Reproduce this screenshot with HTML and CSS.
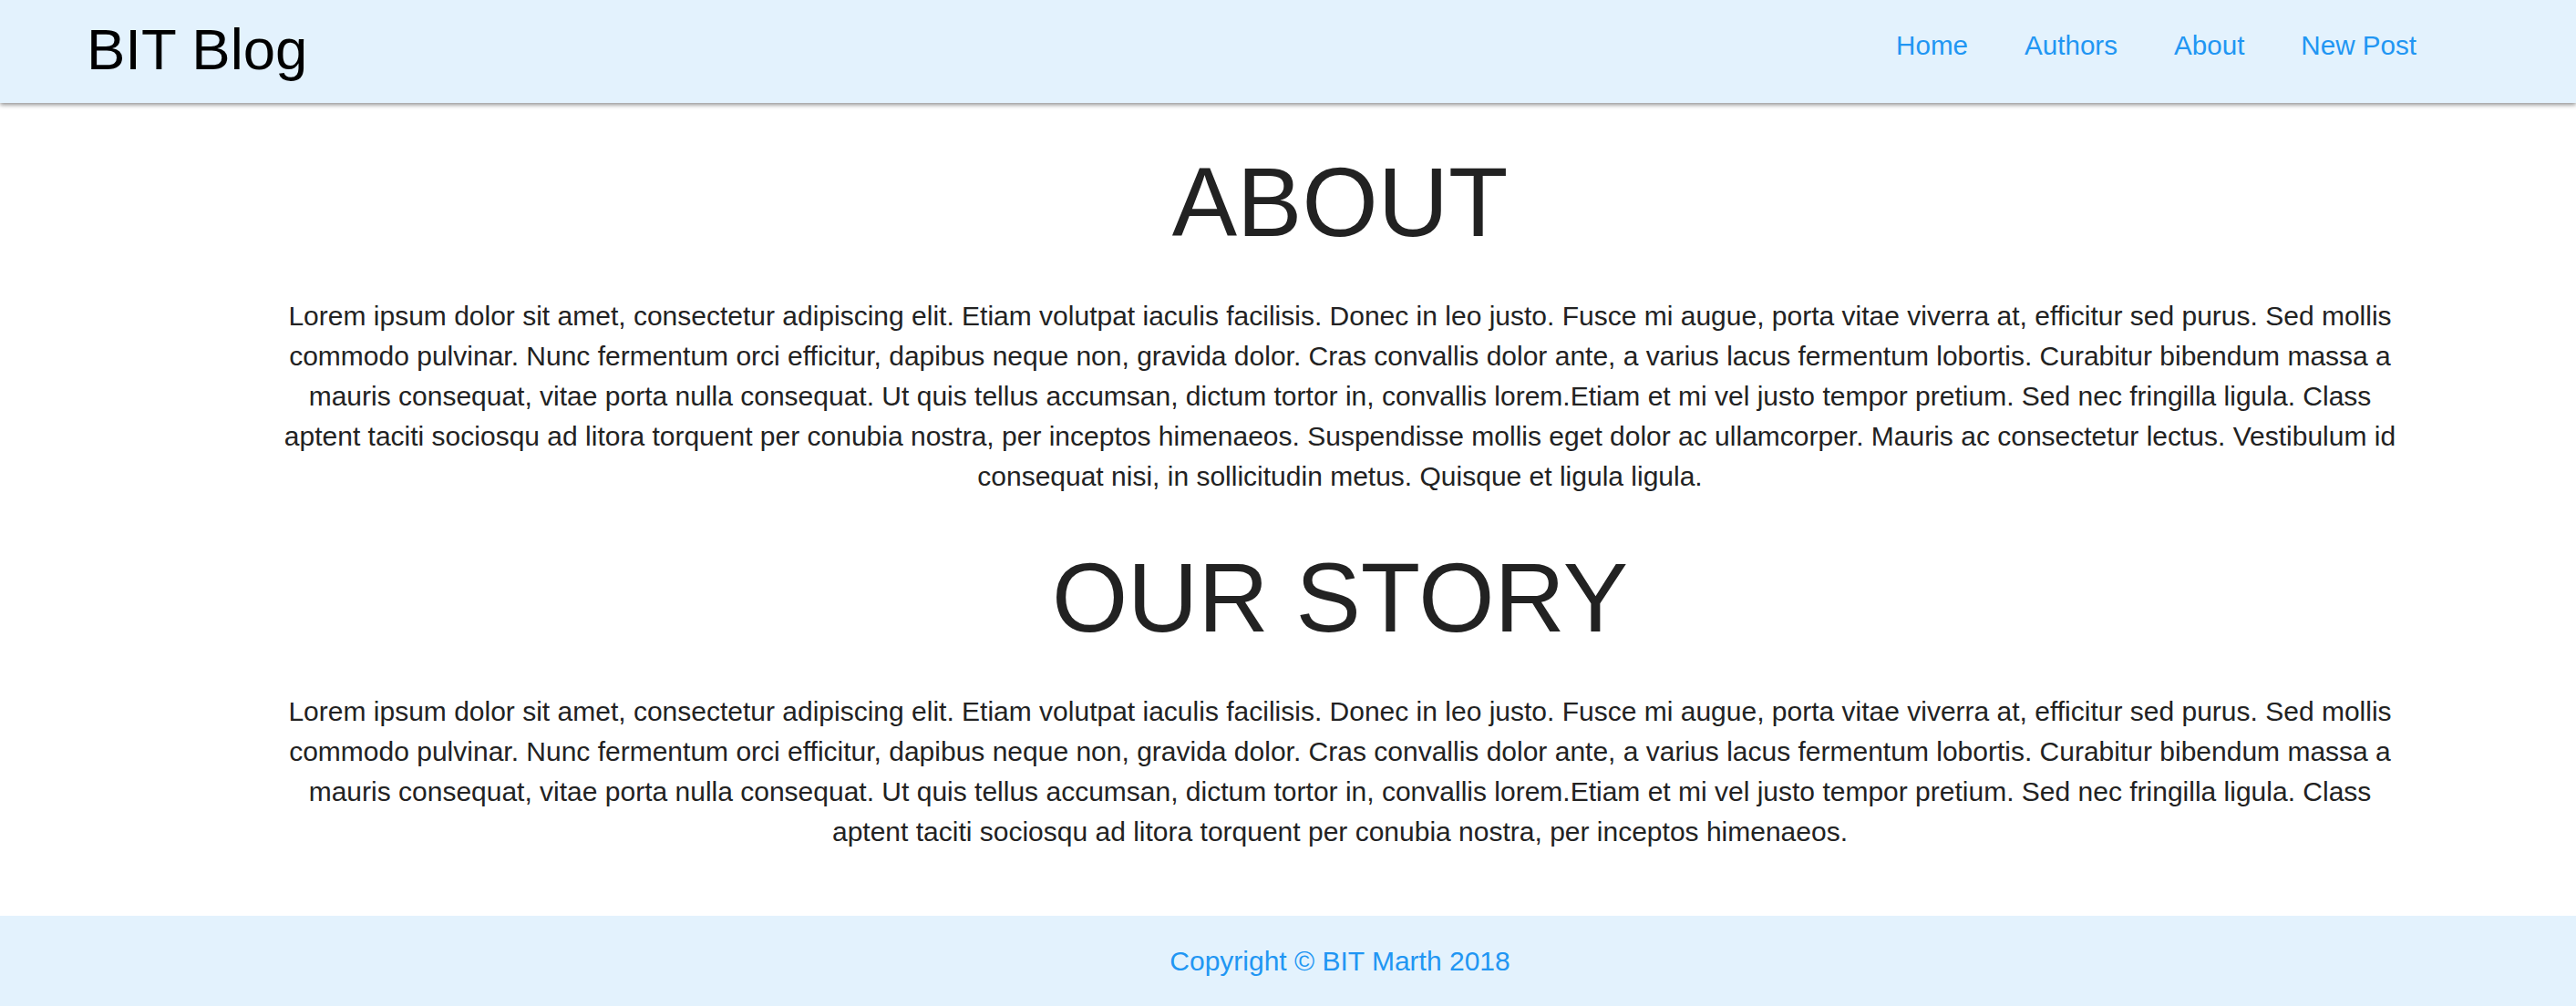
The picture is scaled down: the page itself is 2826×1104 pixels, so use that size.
FILE: index.html
```html
<!DOCTYPE html>
<html lang="en">
<head>
<meta charset="utf-8">
<title>BIT Blog - About</title>
<link rel="stylesheet" href="styles.css">
</head>
<body>
<header class="topbar">
  <a class="brand" href="#">BIT Blog</a>
  <nav class="nav">
    <a href="#">Home</a>
    <a href="#">Authors</a>
    <a href="#">About</a>
    <a href="#">New Post</a>
  </nav>
</header>
<main class="content">
  <section class="block">
    <h1 class="title">ABOUT</h1>
    <p class="text">Lorem ipsum dolor sit amet, consectetur adipiscing elit. Etiam volutpat iaculis facilisis. Donec in leo justo. Fusce mi augue, porta vitae viverra at, efficitur sed purus. Sed mollis commodo pulvinar. Nunc fermentum orci efficitur, dapibus neque non, gravida dolor. Cras convallis dolor ante, a varius lacus fermentum lobortis. Curabitur bibendum massa a mauris consequat, vitae porta nulla consequat. Ut quis tellus accumsan, dictum tortor in, convallis lorem.Etiam et mi vel justo tempor pretium. Sed nec fringilla ligula. Class aptent taciti sociosqu ad litora torquent per conubia nostra, per inceptos himenaeos. Suspendisse mollis eget dolor ac ullamcorper. Mauris ac consectetur lectus. Vestibulum id consequat nisi, in sollicitudin metus. Quisque et ligula ligula.</p>
  </section>
  <section class="block">
    <h1 class="title">OUR STORY</h1>
    <p class="text">Lorem ipsum dolor sit amet, consectetur adipiscing elit. Etiam volutpat iaculis facilisis. Donec in leo justo. Fusce mi augue, porta vitae viverra at, efficitur sed purus. Sed mollis commodo pulvinar. Nunc fermentum orci efficitur, dapibus neque non, gravida dolor. Cras convallis dolor ante, a varius lacus fermentum lobortis. Curabitur bibendum massa a mauris consequat, vitae porta nulla consequat. Ut quis tellus accumsan, dictum tortor in, convallis lorem.Etiam et mi vel justo tempor pretium. Sed nec fringilla ligula. Class aptent taciti sociosqu ad litora torquent per conubia nostra, per inceptos himenaeos.</p>
  </section>
</main>
<footer class="footer">
  <p class="copy">Copyright © BIT Marth 2018</p>
</footer>
</body>
</html>
```

FILE: styles.css
```css
* { box-sizing: border-box; }
html, body { margin: 0; padding: 0; }
body {
  font-family: "Liberation Sans", Arial, Helvetica, sans-serif;
  background: #ffffff;
  color: #222222;
  width: 2826px;
  min-height: 1104px;
  display: flex;
  flex-direction: column;
}
.topbar {
  height: 113px;
  background: #e3f2fd;
  display: flex;
  align-items: center;
  justify-content: space-between;
  padding: 0 175px 0 95px;
  box-shadow: 0 2px 5px rgba(0, 0, 0, 0.45);
  position: relative;
  z-index: 1;
}
.brand {
  font-size: 63.5px;
  color: #000000;
  text-decoration: none;
  line-height: 1;
  margin-top: -4px;
}
.nav {
  display: flex;
  gap: 62px;
  margin-top: -14px;
}
.nav a {
  font-size: 29.6px;
  color: #2196f3;
  text-decoration: none;
}
.content {
  flex: 1;
  padding: 43px 196px 70px 310px;
  display: flex;
  flex-direction: column;
  gap: 45px;
}
.block {
  display: flex;
  flex-direction: column;
  gap: 37px;
}
.title {
  margin: 0;
  font-weight: normal;
  font-size: 107px;
  line-height: 132px;
  text-align: center;
  color: #222222;
}
.text {
  margin: 0;
  font-size: 30px;
  line-height: 44px;
  text-align: center;
  color: #222222;
}
.footer {
  height: 100px;
  background: #e3f2fd;
  display: flex;
  align-items: center;
  justify-content: center;
  padding-left: 114px;
}
.copy {
  margin: 0;
  font-size: 30px;
  color: #2196f3;
}
```
